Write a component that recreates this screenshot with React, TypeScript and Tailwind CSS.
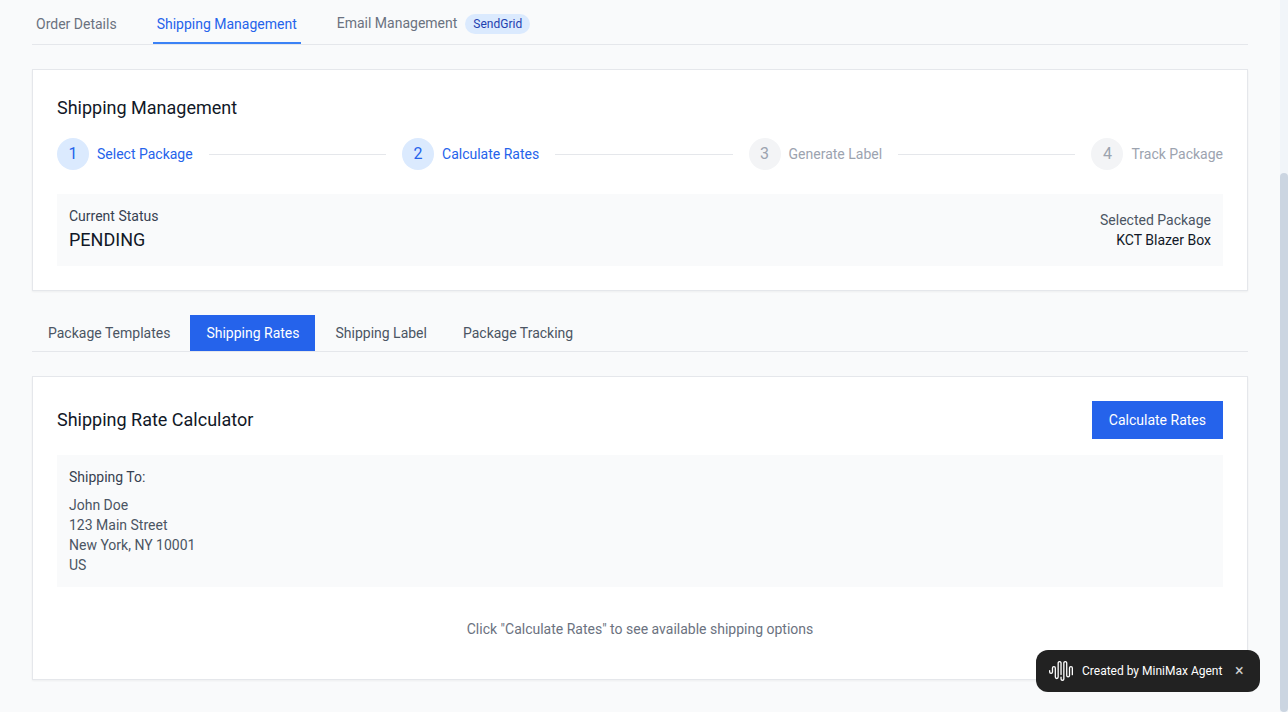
import { Fragment } from "react";
import clsx from "clsx";

const steps = [
  { label: "Select Package", active: true },
  { label: "Calculate Rates", active: true },
  { label: "Generate Label", active: false },
  { label: "Track Package", active: false },
];

const subTabs = ["Package Templates", "Shipping Rates", "Shipping Label", "Package Tracking"];

const address = ["John Doe", "123 Main Street", "New York, NY 10001", "US"];

function MainTabs() {
  return (
    <nav className="flex gap-8 border-b border-[#e5e7eb] text-[#6b7280]">
      <button className="border-b-2 border-transparent px-1 py-2">Order Details</button>
      <button className="border-b-2 border-[#3b82f6] px-1 py-2 text-[#2563eb]">
        Shipping Management
      </button>
      <button className="flex border-b-2 border-transparent px-1 py-2">
        <span className="-mt-px">Email Management</span>
        <span className="ml-2 h-5 rounded-full bg-[#dbeafe] px-2 py-0.5 text-xs text-[#1e40af]">
          SendGrid
        </span>
      </button>
    </nav>
  );
}

function StatusCard() {
  return (
    <section className="mt-6 border border-[#e5e7eb] bg-white p-6 shadow-[0_1px_2px_0_rgba(0,0,0,0.05)]">
      <h2 className="text-lg leading-7 text-[#111827]">Shipping Management</h2>
      <div className="mt-4 flex items-center">
        {steps.map((step, i) => (
          <Fragment key={step.label}>
            {i > 0 && <div className="mx-4 h-px flex-1 bg-[#e5e7eb]" />}
            <div
              className={clsx(
                "flex items-center",
                step.active ? "text-[#2563eb]" : "text-[#9ca3af]",
              )}
            >
              <div
                className={clsx(
                  "flex size-8 items-center justify-center rounded-full text-base",
                  step.active ? "bg-[#dbeafe]" : "bg-[#f3f4f6]",
                )}
              >
                {i + 1}
              </div>
              <span className="ml-2">{step.label}</span>
            </div>
          </Fragment>
        ))}
      </div>
      <div className="mt-6 flex items-center justify-between bg-[#f9fafb] p-3">
        <div>
          <p className="text-[#374151]">Current Status</p>
          <p className="text-lg leading-7 text-[#111827]">PENDING</p>
        </div>
        <div className="text-right">
          <p className="text-[#4b5563]">Selected Package</p>
          <p className="text-[#111827]">KCT Blazer Box</p>
        </div>
      </div>
    </section>
  );
}

function SubTabs() {
  return (
    <nav className="mt-6 flex gap-1 border-b border-[#e5e7eb]">
      {subTabs.map((tab) => (
        <button
          key={tab}
          className={clsx(
            "px-4 py-2",
            tab === "Shipping Rates" ? "bg-[#2563eb] text-white" : "text-[#4b5563]",
          )}
        >
          {tab}
        </button>
      ))}
    </nav>
  );
}

function RateCalculator() {
  return (
    <section className="mt-6 border border-[#e5e7eb] bg-white p-6 shadow-[0_1px_2px_0_rgba(0,0,0,0.05)]">
      <div className="flex items-center justify-between">
        <h2 className="text-lg leading-7 text-[#111827]">Shipping Rate Calculator</h2>
        <button className="border border-transparent bg-[#2563eb] px-4 py-2 text-white">
          Calculate Rates
        </button>
      </div>
      <div className="mt-4 bg-[#f9fafb] p-3">
        <h3 className="mb-2 text-[#374151]">Shipping To:</h3>
        <div className="text-[#4b5563]">
          {address.map((line) => (
            <p key={line}>{line}</p>
          ))}
        </div>
      </div>
      <p className="pt-8 pb-4 text-center text-[#6b7280]">
        Click "Calculate Rates" to see available shipping options
      </p>
    </section>
  );
}

function AgentBadge() {
  return (
    <div className="absolute right-7 bottom-5 flex h-[42px] w-56 items-center rounded-xl bg-[#222222] pl-[13px] text-xs text-white">
      <svg viewBox="0 0 24 24" className="size-6 shrink-0" fill="currentColor">
        <path d="M16.278 2c1.156 0 2.093.927 2.093 2.07v12.501a.74.74 0 00.744.709.74.74 0 00.743-.709V9.099a2.06 2.06 0 012.071-2.049A2.06 2.06 0 0124 9.1v6.561a.649.649 0 01-.652.645.649.649 0 01-.653-.645V9.1a.762.762 0 00-.766-.758.762.762 0 00-.766.758v7.472a2.037 2.037 0 01-2.048 2.026 2.037 2.037 0 01-2.048-2.026v-12.5a.785.785 0 00-.788-.753.785.785 0 00-.789.752l-.001 15.904A2.037 2.037 0 0113.441 22a2.037 2.037 0 01-2.048-2.026V18.04c0-.356.292-.645.652-.645.36 0 .652.289.652.645v1.934c0 .263.142.506.372.638.23.131.514.131.744 0a.734.734 0 00.372-.638V4.07c0-1.143.937-2.07 2.093-2.07zm-5.674 0c1.156 0 2.093.927 2.093 2.07v11.523a.648.648 0 01-.652.645.648.648 0 01-.652-.645V4.07a.785.785 0 00-.789-.78.785.785 0 00-.789.78v14.013a2.06 2.06 0 01-2.07 2.048 2.06 2.06 0 01-2.071-2.048V9.1a.762.762 0 00-.766-.758.762.762 0 00-.766.758v3.8a2.06 2.06 0 01-2.071 2.049A2.06 2.06 0 010 12.9v-1.378c0-.357.292-.646.652-.646.36 0 .653.29.653.646V12.9c0 .418.343.757.766.757s.766-.339.766-.757V9.099a2.06 2.06 0 012.07-2.048 2.06 2.06 0 012.071 2.048v8.984c0 .419.343.758.767.758.423 0 .766-.339.766-.758V4.07c0-1.143.937-2.07 2.093-2.07z" />
      </svg>
      <span className="ml-[9px] whitespace-nowrap">Created by MiniMax Agent</span>
      <button aria-label="Close" className="ml-2 flex size-[18px] items-center justify-center text-white/80">
        <span className="text-base leading-none">×</span>
      </button>
    </div>
  );
}

export default function App() {
  return (
    <div className="relative flex h-[712px] w-[1288px] overflow-hidden bg-[#f9fafb] font-[Roboto,sans-serif] text-sm leading-5 antialiased">
      <main className="flex-1 px-8 pt-1.5">
        <MainTabs />
        <StatusCard />
        <SubTabs />
        <RateCalculator />
      </main>
      <div className="flex w-2 flex-col bg-[#f1f5f9] pt-[173px]">
        <div className="flex-1 rounded bg-[#cbd5e1]" />
      </div>
      <AgentBadge />
    </div>
  );
}
